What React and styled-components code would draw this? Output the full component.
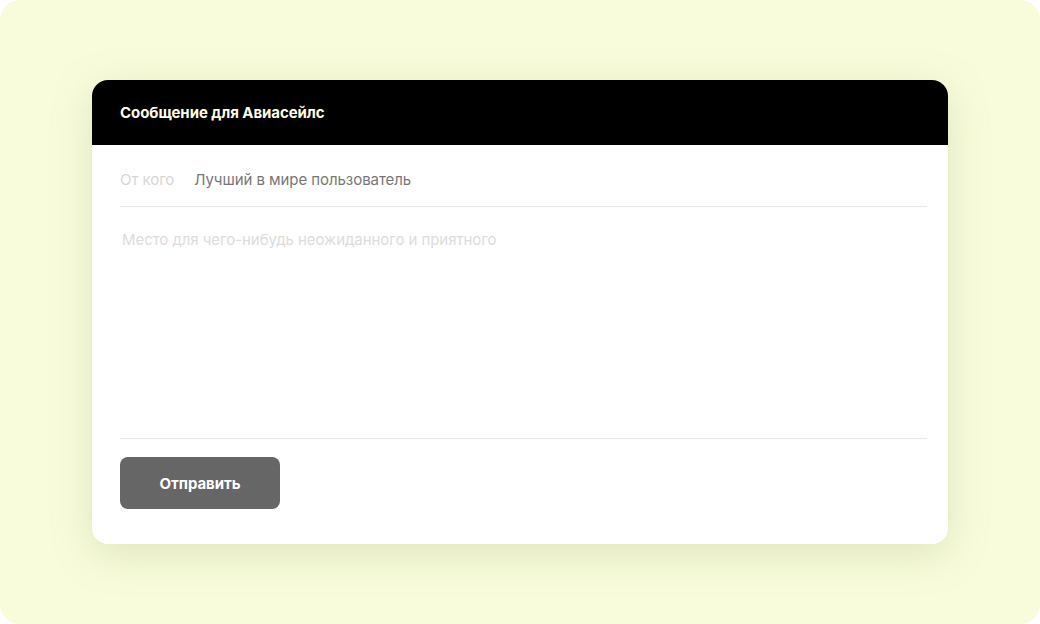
import React from 'react';
import styled, { createGlobalStyle } from 'styled-components';

const GlobalStyle = createGlobalStyle`
  html, body {
    margin: 0;
    padding: 0;
    background: #ffffff;
  }
  * {
    box-sizing: border-box;
  }
`;

const Frame = styled.div`
  width: 1040px;
  height: 624px;
  border-radius: 20px;
  background: #f8fcdb;
  padding-top: 80px;
  display: flex;
  justify-content: center;
  align-items: flex-start;
  font-family: Inter, 'Liberation Sans', sans-serif;
  letter-spacing: -0.004em;
`;

const Card = styled.div`
  width: 856px;
  height: 464px;
  background: #ffffff;
  border-radius: 16px;
  overflow: hidden;
  box-shadow: 0 10px 40px rgba(150, 160, 110, 0.25);
  display: flex;
  flex-direction: column;
`;

const Header = styled.div`
  height: 65px;
  background: #000000;
  display: flex;
  align-items: center;
  padding: 0 28px;
`;

const Title = styled.div`
  color: #fffbe8;
  font-size: 15px;
  font-weight: 700;
`;

const Body = styled.div`
  flex: 1;
  display: flex;
  flex-direction: column;
  padding: 0 21px 35px 28px;
`;

const FromRow = styled.div`
  height: 62px;
  padding-top: 8px;
  display: flex;
  align-items: center;
  gap: 20px;
  border-bottom: 1px solid #e8e8e8;
  font-size: 15px;
`;

const Label = styled.span`
  color: #d6d6d6;
`;

const Value = styled.span`
  color: #777777;
`;

const Message = styled.div`
  flex: 1;
  padding: 23px 2px 0;
  font-size: 15px;
  color: #dcdcdc;
  border-bottom: 1px solid #e8e8e8;
`;

const Footer = styled.div`
  padding-top: 18px;
`;

const Button = styled.button`
  width: 160px;
  height: 52px;
  border: none;
  border-radius: 8px;
  background: #666666;
  color: #ffffff;
  font-family: inherit;
  letter-spacing: inherit;
  font-size: 15px;
  font-weight: 700;
`;

export default function App() {
  return (
    <>
      <GlobalStyle />
      <Frame>
        <Card>
          <Header>
            <Title>Сообщение для Авиасейлс</Title>
          </Header>
          <Body>
            <FromRow>
              <Label>От кого</Label>
              <Value>Лучший в мире пользователь</Value>
            </FromRow>
            <Message>Место для чего-нибудь неожиданного и приятного</Message>
            <Footer>
              <Button>Отправить</Button>
            </Footer>
          </Body>
        </Card>
      </Frame>
    </>
  );
}
